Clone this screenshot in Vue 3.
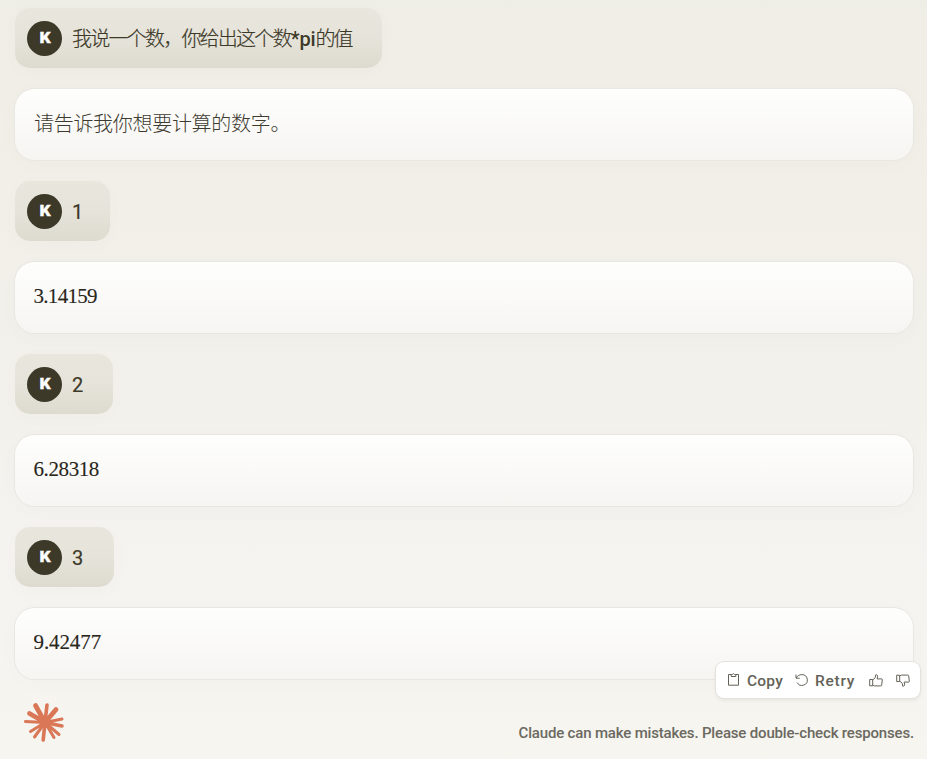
<script setup>
const turns = [
  { parts: [{ t: '我说一个数，你给出这个数', cjk: true }, { t: '*pi', bold: true }, { t: '的值', cjk: true }], width: 367, reply: '请告诉我你想要计算的数字。', zh: true },
  { parts: [{ t: '1' }], width: 95, reply: '3.14159', spacing: -0.7 },
  { parts: [{ t: '2' }], width: 98, reply: '6.28318', spacing: -0.4 },
  { parts: [{ t: '3' }], width: 99, reply: '9.42477', spacing: -0.1 },
]
</script>

<template>
  <main class="page">
    <section v-for="(turn, i) in turns" :key="i" class="turn">
      <div class="user" :style="{ width: turn.width + 'px' }">
        <span class="avatar">K</span>
        <p class="prompt"><span v-for="(p, j) in turn.parts" :key="j" :class="{ cjk: p.cjk, bold: p.bold }">{{ p.t }}</span></p>
      </div>
      <div class="reply" :class="{ zh: turn.zh }">
        <p :style="turn.zh ? null : { letterSpacing: turn.spacing + 'px' }">{{ turn.reply }}</p>
        <div v-if="i === turns.length - 1" class="actions">
          <button class="copy">
            <svg width="13" height="14" viewBox="0 0 13 14"><path d="M4 1.500H1.500v10.700h10V1.500H9M4.200 1.500h1.100L6.500.6l1.200.9h1.100v2H4.200z" /></svg>
            <span>Copy</span>
          </button>
          <button class="retry">
            <svg width="14" height="14" viewBox="0 0 14 14"><path d="M1 1.500v3.700h3.700M1.200 5C2.300 3 4.300 1.600 6.900 1.600a5.400 5.400 0 1 1-4.700 8" /></svg>
            <span>Retry</span>
          </button>
          <button class="up" aria-label="Good response">
            <svg width="14" height="13" viewBox="0 0 14 13"><path d="M.7 5.500h3v6.300h-3zM3.700 6l2.500-2.300L6.700.8c1.500-.2 2.200.8 1.900 2.100l-.5 2h4.700c.5 0 .6.400.5.900l-.6 5.400c-.1.500-.4.700-.9.700H5.300L3.700 11" /></svg>
          </button>
          <button class="down" aria-label="Bad response">
            <svg width="14" height="13" viewBox="0 0 14 13"><path d="M.7 5.500h3v6.300h-3zM3.700 6l2.500-2.300L6.700.8c1.500-.2 2.200.8 1.900 2.100l-.5 2h4.700c.5 0 .6.400.5.900l-.6 5.400c-.1.500-.4.700-.9.700H5.300L3.700 11" /></svg>
          </button>
        </div>
      </div>
    </section>
    <footer>
      <svg class="burst" width="42" height="43" viewBox="0 0 42 43">
        <path stroke-width="4.800" d="M22 22.500 12.500 5.500M22 22.500 33 9.500M22 22.500 6.500 13.500" />
        <path stroke-width="3.600" d="M22 22.500 24 5M22 22.500 39 26M22 22.500 20.200 40" />
        <path stroke-width="3" d="M22 22.500 39 19M22 22.500 36 34.500M22 22.500 31 37.500M22 22.500 11.500 37M22 22.500 7.500 31.500M22 22.500 2.500 21.500" />
        <circle class="core" cx="22" cy="22.500" r="5.500" />
      </svg>
      <p>Claude can make mistakes. Please double-check responses.</p>
    </footer>
  </main>
</template>

<style>
body { margin: 0; }
</style>

<style scoped>
* { box-sizing: border-box; }
p { margin: 0; }
.page {
  width: 927px;
  height: 759px;
  padding: 8px 13px 0 15px;
  overflow: hidden;
  background: linear-gradient(180deg, #efeee6 0, #f1eee7 90px, #f2efe8 190px, #f1f0ea 330px, #f4f3ef 540px, #f6f5f0 759px);
  font-family: Roboto, "Noto Sans CJK SC", sans-serif;
}
.turn { display: flex; flex-direction: column; align-items: flex-start; gap: 21px; margin-bottom: 21px; }
.user {
  height: 60px;
  display: flex;
  align-items: center;
  gap: 10px;
  padding: 0 12px;
  border-radius: 15px;
  background: linear-gradient(180deg, #e8e6dd 0%, #e6e4da 50%, #dddbcf 100%);
  box-shadow: 0 4px 20px rgba(60, 55, 35, .02);
}
.avatar {
  flex: none;
  width: 35px;
  height: 35px;
  border-radius: 50%;
  background: #3d3929;
  color: #fff;
  font: 900 15px/34px Inter, sans-serif;
  text-align: center;
  padding-left: 2px;
  -webkit-text-stroke: .4px #fff;
}
.prompt { padding-top: 1px; color: #3d3929; font-size: 20px; line-height: 30px; white-space: nowrap; -webkit-text-stroke: .2px #3d3929; }
.cjk { font-weight: 300; letter-spacing: -1.770px; }
.bold { font-weight: 500; letter-spacing: -.2px; -webkit-text-stroke: 0; }
.reply {
  position: relative;
  width: 898px;
  height: 71px;
  padding: 0 19px;
  display: flex;
  align-items: center;
  border-radius: 20px;
  background: linear-gradient(180deg, #fefefd, #f6f5f2);
  box-shadow: 0 0 0 1px #e8e7e2, 0 4px 24px rgba(60, 55, 35, .02);
  color: #29261b;
  font: 21px/30px "Liberation Serif", serif;
}
.reply > p { padding-bottom: 4px; margin-left: -.5px; -webkit-text-stroke: .12px #29261b; }
.reply.zh { color: #3d3a30; font: 300 20px/30px "Noto Sans CJK SC", sans-serif; letter-spacing: -.3px; }
.reply.zh > p { margin-left: 0; -webkit-text-stroke: 0; }
.actions {
  position: absolute;
  right: -7px;
  top: 54px;
  width: 204px;
  height: 36px;
  display: flex;
  align-items: center;
  padding-left: 11px;
  background: #fff;
  border-radius: 8px;
  box-shadow: 0 0 0 1px #e3e2dc, 0 2px 4px rgba(60, 55, 35, .1);
}
button {
  display: flex;
  align-items: center;
  padding: 0;
  border: 0;
  background: none;
  color: #656358;
  font: 500 15.500px/20px Roboto, sans-serif;
}
button span { padding-top: 1px; }
button svg { flex: none; fill: none; stroke: #656358; stroke-width: 1; stroke-linejoin: round; }
.copy { gap: 7px; width: 68px; letter-spacing: .2px; }
.retry { gap: 6px; width: 74px; letter-spacing: .75px; }
.up { width: 27px; }
.down svg { transform: scaleY(-1); }
footer { display: flex; justify-content: space-between; padding-left: 8px; }
.burst { stroke: #d97757; stroke-linecap: round; }
.core { fill: #d97757; stroke: none; }
footer p { padding-top: 23px; color: #6b6960; font: 500 15px/20px Roboto, sans-serif; letter-spacing: -.17px; }
</style>
